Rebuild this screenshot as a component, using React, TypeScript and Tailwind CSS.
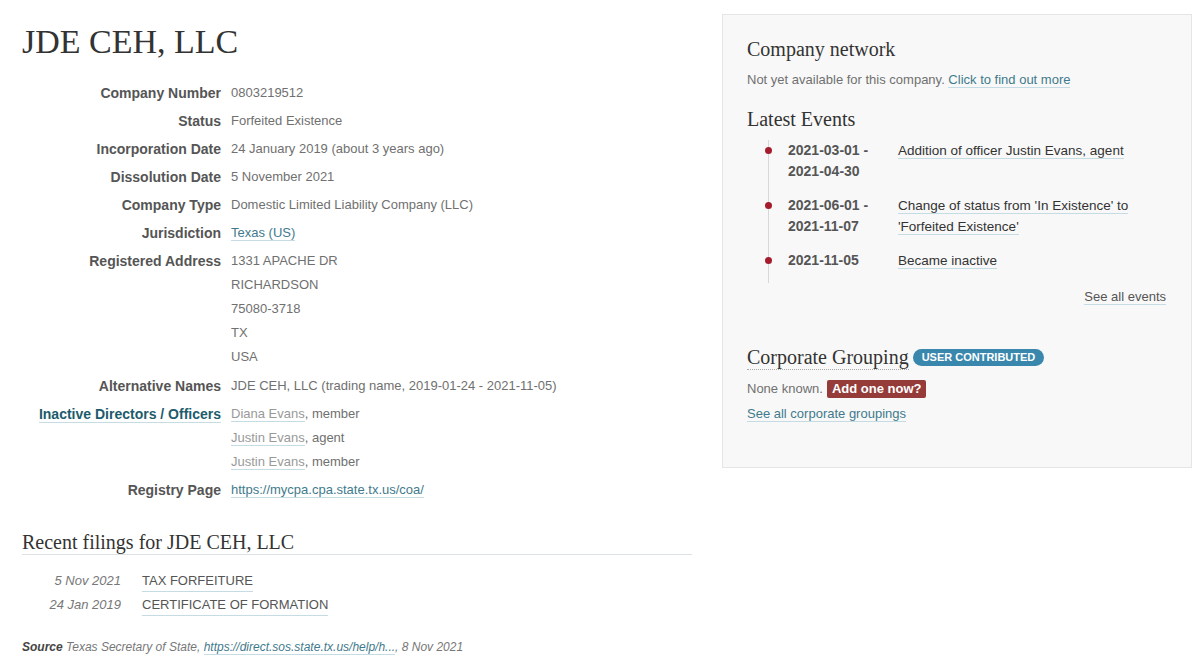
import React from 'react';

const sans = "font-['Liberation_Sans',Arial,sans-serif]";
const serif = "font-['Liberation_Serif','Times_New_Roman',serif]";

type Row = { label: string; values: React.ReactNode[]; labelLink?: boolean };

const link = 'text-[#3f7a8c] border-b border-[#c5dce4]';

const rows: Row[] = [
  { label: 'Company Number', values: ['0803219512'] },
  { label: 'Status', values: ['Forfeited Existence'] },
  { label: 'Incorporation Date', values: ['24 January 2019 (about 3 years ago)'] },
  { label: 'Dissolution Date', values: ['5 November 2021'] },
  { label: 'Company Type', values: ['Domestic Limited Liability Company (LLC)'] },
  { label: 'Jurisdiction', values: [<a className={link}>Texas (US)</a>] },
  { label: 'Registered Address', values: ['1331 APACHE DR', 'RICHARDSON', '75080-3718', 'TX', 'USA'] },
  { label: 'Alternative Names', values: ['JDE CEH, LLC (trading name, 2019-01-24 - 2021-11-05)'] },
  {
    label: 'Inactive Directors / Officers',
    labelLink: true,
    values: [
      <><a className="text-[#999] border-b border-[#c5dce4]">Diana Evans</a>, member</>,
      <><a className="text-[#999] border-b border-[#c5dce4]">Justin Evans</a>, agent</>,
      <><a className="text-[#999] border-b border-[#c5dce4]">Justin Evans</a>, member</>,
    ],
  },
  { label: 'Registry Page', values: [<a className={link}>https://mycpa.cpa.state.tx.us/coa/</a>] },
];

const events = [
  { date: ['2021-03-01 -', '2021-04-30'], text: 'Addition of officer Justin Evans, agent' },
  { date: ['2021-06-01 -', '2021-11-07'], text: ["Change of status from 'In Existence' to", "'Forfeited Existence'"] },
  { date: ['2021-11-05'], text: 'Became inactive' },
];

export default function App() {
  return (
    <div className={`${sans} bg-white min-h-screen flex gap-[30px] px-[22px] text-[#707070]`}>
      {/* Main column */}
      <div className="w-[670px] shrink-0">
        <h1 className={`${serif} text-[34px] leading-[40px] text-[#333] pt-[22px]`}>JDE CEH, LLC</h1>

        <dl className="mt-[19px]">
          {rows.map((row) => (
            <div key={row.label} className={`flex ${row.values.length > 4 ? 'pb-[5px]' : 'pb-[4px]'}`}>
              <dt className="w-[199px] shrink-0 text-right text-[14px] leading-[24px] font-bold">
                {row.labelLink ? (
                  <a className="text-[#1d5b6c] border-b border-[#c5dce4]">{row.label}</a>
                ) : (
                  <span className="text-[#555]">{row.label}</span>
                )}
              </dt>
              <dd className="ml-[10px] text-[13px] leading-[24px]">
                {row.values.map((v, i) => (
                  <div key={i}>{v}</div>
                ))}
              </dd>
            </div>
          ))}
        </dl>

        <h2 className={`${serif} mt-[25px] text-[20px] leading-[23px] text-[#333] border-b border-[#dde3e5]`}>
          Recent filings for JDE CEH, LLC
        </h2>
        <div className="mt-[14px] text-[13px] leading-[24px]">
          {[
            ['5 Nov 2021', 'TAX FORFEITURE'],
            ['24 Jan 2019', 'CERTIFICATE OF FORMATION'],
          ].map(([d, t]) => (
            <div key={t} className="flex gap-[21px]">
              <span className="w-[99px] text-right italic text-[#777]">{d}</span>
              <a className="text-[#555] border-b border-[#c5dce4] leading-[20px] self-center">{t}</a>
            </div>
          ))}
        </div>

        <p className="mt-[21px] text-[12px] leading-[18px] italic text-[#777]">
          <b className="text-[#444]">Source</b> Texas Secretary of State,{' '}
          <a className={link}>https://direct.sos.state.tx.us/help/h...</a>, 8 Nov 2021
        </p>
      </div>

      {/* Sidebar */}
      <div className="mt-[14px] w-[470px] shrink-0 self-start bg-[#f8f8f8] border border-[#e5e5e5] pl-[24px] pr-[25px] pt-[22px] pb-[43px]">
        <h3 className={`${serif} text-[20px] leading-[24px] text-[#333]`}>Company network</h3>
        <p className="mt-[9px] text-[13px] leading-[20px]">
          Not yet available for this company. <a className={link}>Click to find out more</a>
        </p>

        <h3 className={`${serif} mt-[17px] text-[20px] leading-[24px] text-[#333]`}>Latest Events</h3>
        <ul className="mt-[9px] ml-[21px] border-l border-[#d8d8d8] pb-[12px] flex flex-col gap-[13px]">
          {events.map((e, i) => (
            <li key={i} className="relative flex text-[14px] leading-[21px]">
              <span className="absolute -left-[4px] top-[7px] w-[7px] h-[7px] rounded-full bg-[#a51d2d]" />
              <div className="ml-[19px] w-[110px] shrink-0 font-bold text-[#555]">
                {e.date.map((d) => (
                  <div key={d}>{d}</div>
                ))}
              </div>
              <div className="text-[#333] text-[13.5px]">
                {(Array.isArray(e.text) ? e.text : [e.text]).map((t) => (
                  <div key={t}>
                    <a className="border-b border-[#c5dce4]">{t}</a>
                  </div>
                ))}
              </div>
            </li>
          ))}
        </ul>
        <div className="mt-[4px] text-right text-[13px] leading-[20px]">
          <a className="text-[#555] border-b border-[#c5dce4]">See all events</a>
        </div>

        <div className="mt-[38px] flex items-center gap-[4px]">
          <h3 className={`${serif} text-[20px] leading-[24px] text-[#333] border-b border-dotted border-[#aaa]`}>
            Corporate Grouping
          </h3>
          <span className="bg-[#3a87ad] text-white text-[11px] font-bold leading-[17px] px-[9px] rounded-full uppercase">
            User contributed
          </span>
        </div>
        <p className="mt-[9px] text-[13px] leading-[20px] flex items-center gap-[4px]">
          None known.
          <span className="bg-[#953b39] text-white font-bold text-[13px] leading-[18px] px-[5px] rounded-[2px]">
            Add one now?
          </span>
        </p>
        <p className="mt-[5px] text-[13px] leading-[20px]">
          <a className={link}>See all corporate groupings</a>
        </p>
      </div>
    </div>
  );
}
